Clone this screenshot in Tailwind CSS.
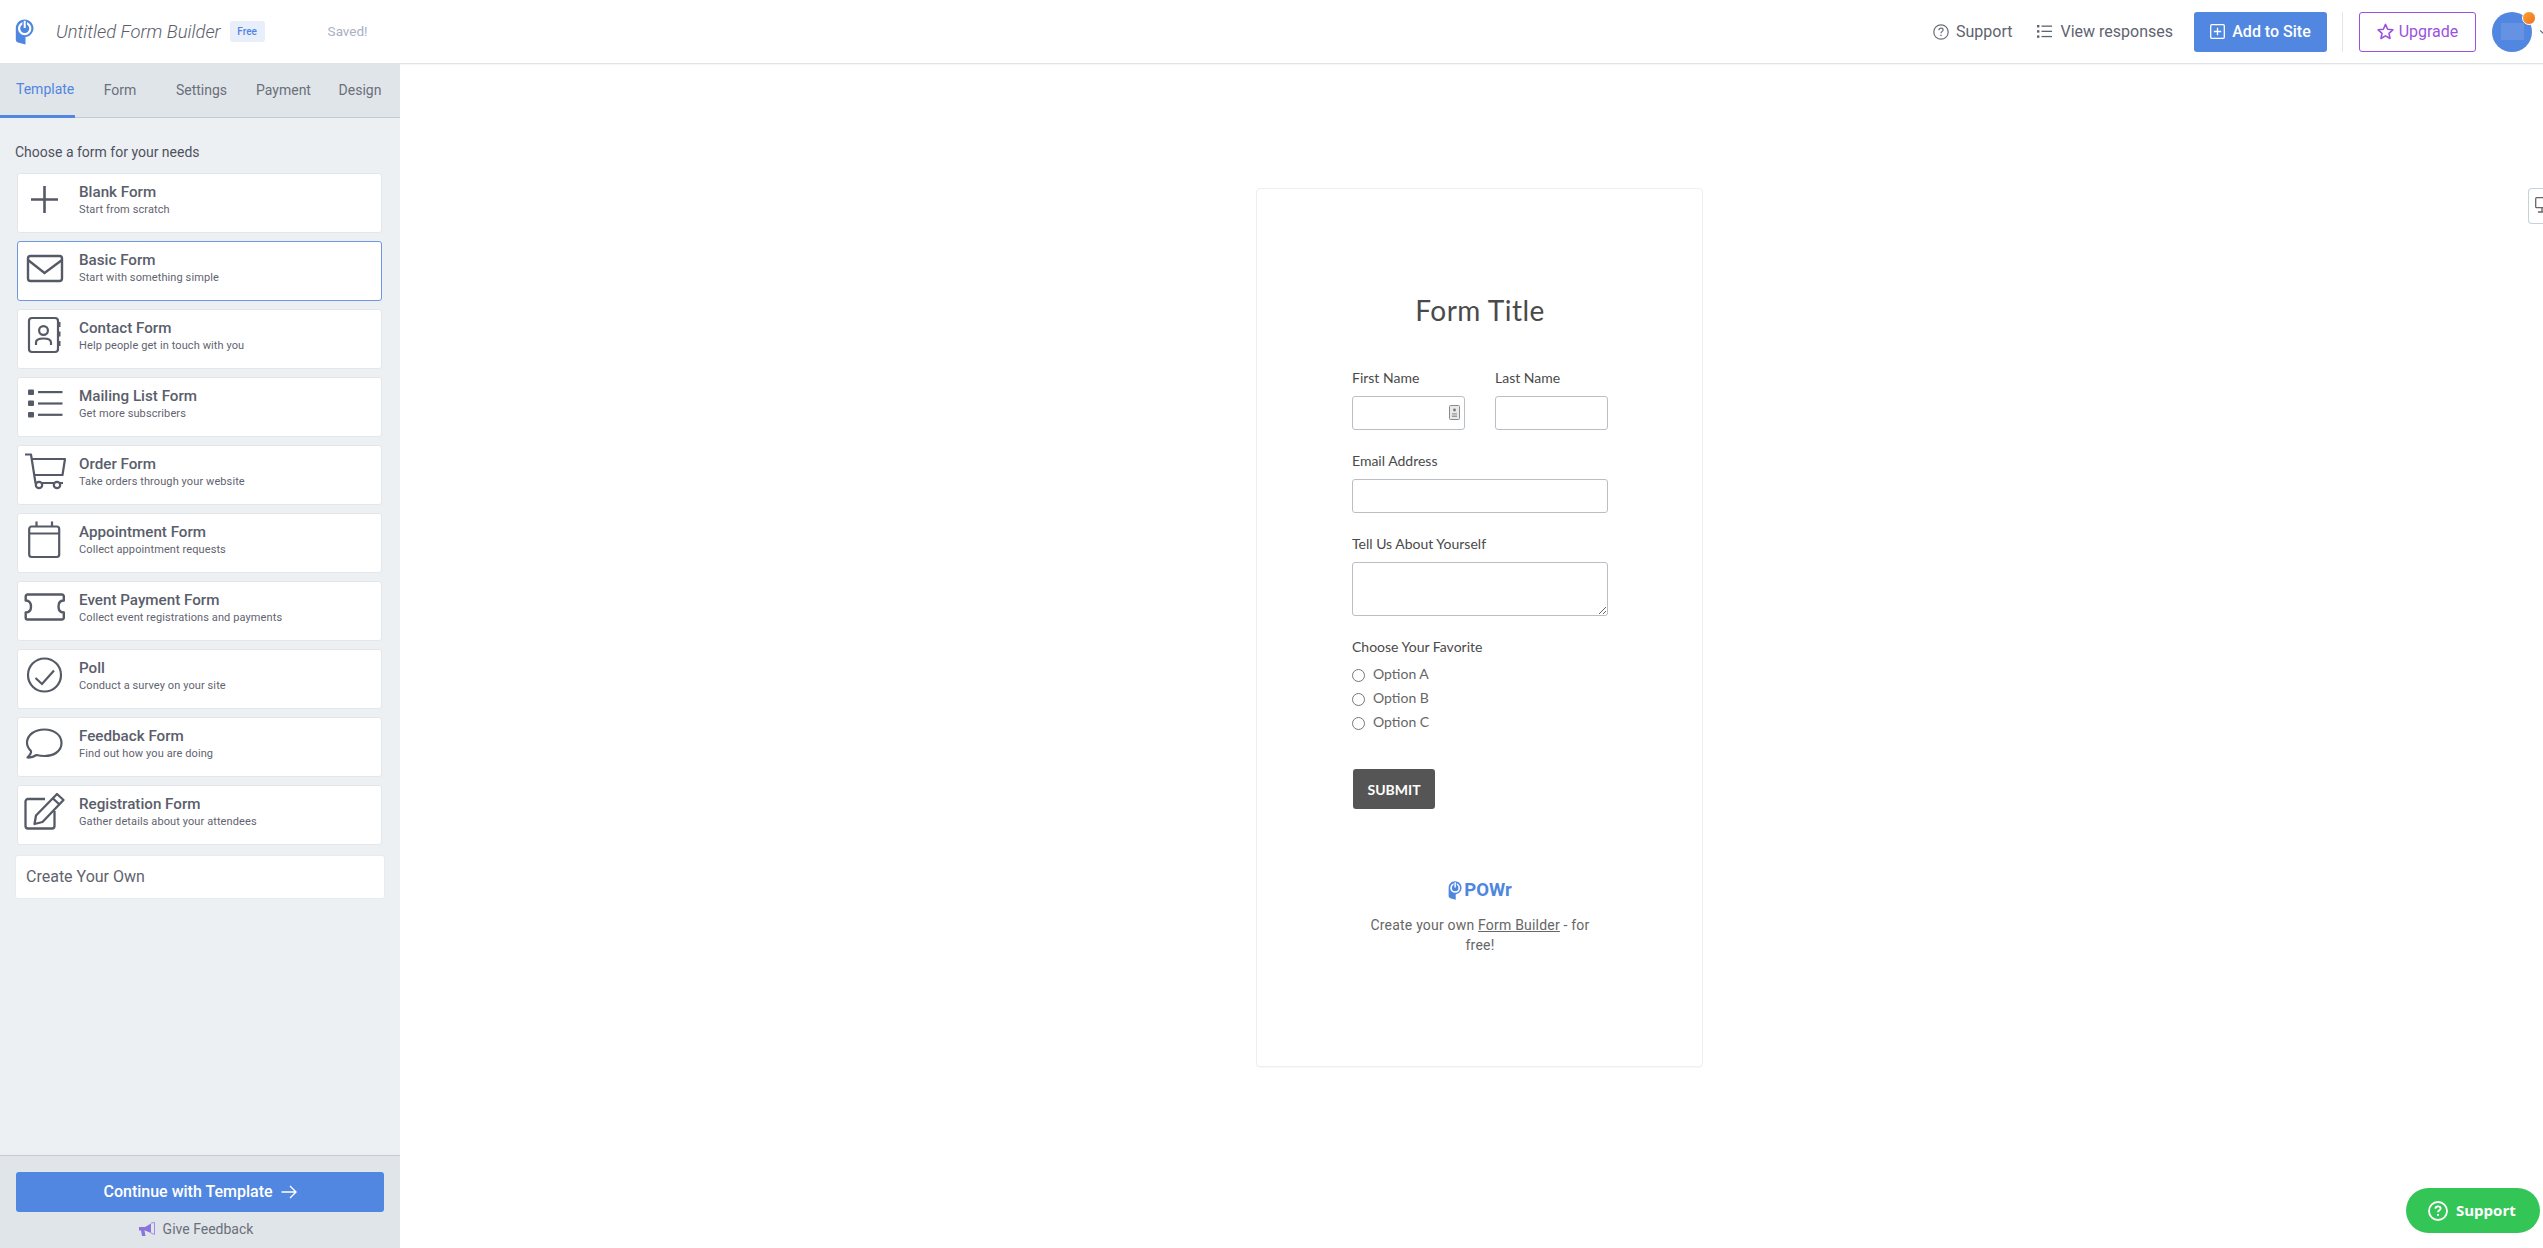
<!doctype html>
<html lang="en">
<head>
    <meta charset="UTF-8">
    <title>Untitled Form Builder</title>
    <script src="https://cdn.jsdelivr.net/npm/@tailwindcss/browser@4"></script>
</head>
<body class="font-['Roboto',sans-serif]">
<div class="h-screen w-full overflow-hidden flex flex-col bg-white relative">

    <!-- top bar -->
    <header class="h-[64px] shrink-0 border-b border-[#e0e3e8] shadow-[0_1px_1px_rgba(0,0,0,0.03)] flex items-center pl-[15px]">
        <svg class="w-[19px] h-[26px] shrink-0" viewBox="0 0 19 26">
            <path fill="#4f86e0" d="M9.5 0.5C14.5 0.5 18.5 4.5 18.5 9.3C18.5 14 14.5 18 10.5 18V25.5L3 23.5C1.5 23 0.8 22 0.8 20.5V9.3C0.8 4.5 4.5 0.5 9.5 0.5Z"/>
            <circle cx="9.7" cy="9.5" r="5.6" fill="none" stroke="#fff" stroke-width="2.2"/>
            <path d="M9.7 2.5V9.5" stroke="#4f86e0" stroke-width="4.6"/>
            <path d="M9.7 1.8V9" stroke="#fff" stroke-width="2"/>
        </svg>
        <span class="ml-[22px] text-[18.4px] italic font-light text-[#5a5e6b] whitespace-nowrap">Untitled Form Builder</span>
        <span class="ml-[9px] h-[21px] w-[35px] rounded-[3px] bg-[#e8effb] text-[#4f86e0] text-[10px] font-medium flex items-center justify-center">Free</span>
        <span class="ml-[63px] text-[13.5px] text-[#a9b0bf]">Saved!</span>

        <div class="ml-auto flex items-center">
            <svg class="w-[16px] h-[16px]" viewBox="0 0 16 16" fill="none" stroke="#6b6f7b" stroke-width="1.2">
                <circle cx="8" cy="8" r="7.2"/>
                <path d="M5.9 6.2C5.9 5 6.8 4.2 8 4.2C9.2 4.2 10.1 5 10.1 6C10.1 7.4 8 7.4 8 9.2"/>
                <path d="M8 10.8V12" stroke-width="1.4"/>
            </svg>
            <span class="ml-[7px] text-[16px] text-[#5f636f]">Support</span>
            <svg class="ml-[25px] w-[15px] h-[15px]" viewBox="0 0 15 15" fill="#5f636f">
                <rect x="0" y="1" width="2.4" height="2.4"/><rect x="0" y="6.2" width="2.4" height="2.4"/><rect x="0" y="11.4" width="2.4" height="2.4"/>
                <rect x="4.5" y="1.5" width="10.5" height="1.3"/><rect x="4.5" y="6.7" width="10.5" height="1.3"/><rect x="4.5" y="11.9" width="10.5" height="1.3"/>
            </svg>
            <span class="ml-[8px] text-[16px] text-[#5f636f] whitespace-nowrap">View responses</span>

            <button class="ml-[21px] h-[40px] w-[133px] rounded-[3px] bg-[#5187e0] text-white text-[16px] font-medium flex items-center justify-center gap-[7px]">
                <svg class="w-[15px] h-[15px]" viewBox="0 0 15 15" fill="none" stroke="#fff" stroke-width="1.3">
                    <rect x="0.7" y="0.7" width="13.6" height="13.6" rx="1"/>
                    <path d="M7.5 3.8V11.2M3.8 7.5H11.2"/>
                </svg>
                Add to Site
            </button>
            <div class="ml-[15px] w-px h-[40px] bg-[#e3e5e9]"></div>
            <button class="ml-[16px] h-[40px] w-[117px] rounded-[3px] border border-[#9b51e0] text-[#9b51e0] text-[16px] flex items-center justify-center gap-[5px]">
                <svg class="w-[17px] h-[17px]" viewBox="0 0 24 24" fill="none" stroke="#9b51e0" stroke-width="2.2" stroke-linejoin="round">
                    <path d="M12 2L15 8.8L22.4 9.6L16.9 14.6L18.4 21.9L12 18.2L5.6 21.9L7.1 14.6L1.6 9.6L9 8.8Z"/>
                </svg>
                Upgrade
            </button>
            <div class="ml-[16px] relative w-[40px] h-[40px] rounded-full bg-[#5187e0] flex items-center justify-center">
                <div class="w-[23px] h-[17px] bg-[#6592e2]"></div>
                <span class="absolute -top-[1px] -right-[4px] w-[14px] h-[14px] rounded-full border border-white bg-gradient-to-br from-[#f5a623] to-[#f26a2e]"></span>
            </div>
            <svg class="ml-[8px] w-[3px] h-[6px]" viewBox="0 0 3 6" fill="none" stroke="#6b6f7b" stroke-width="1.2"><path d="M0 1.5L4 5"/></svg>
        </div>
    </header>

    <div class="flex-1 flex min-h-0">
        <!-- sidebar -->
        <aside class="w-[400px] shrink-0 flex flex-col bg-[#edf0f3]">
            <nav class="h-[54px] shrink-0 bg-[#e0e5e9] border-b border-[#c6cacf] flex text-[14px] text-[#6b6f7b]">
                <a class="w-[75px] h-[54px] flex items-center pl-[16px] text-[#5187e0] border-b-[3px] border-[#5187e0] whitespace-nowrap">Template</a>
                <a class="w-[90px] flex items-center justify-center">Form</a>
                <a class="w-[73px] flex items-center justify-center">Settings</a>
                <a class="w-[91px] flex items-center justify-center">Payment</a>
                <a class="w-[62px] flex items-center justify-center">Design</a>
            </nav>

            <div class="flex-1 min-h-0 pt-[24px]">
                <p class="pl-[15px] text-[14px] leading-[20px] text-[#4d5160]">Choose a form for your needs</p>
                <div class="mt-[11px] ml-[17px] w-[365px] flex flex-col gap-[8px]">

                    <div class="h-[60px] bg-white rounded-[3px] border border-[#e4e7ea] flex">
                        <svg class="ml-[6px] mt-[4px] w-[42px] h-[42px] shrink-0" viewBox="0 0 42 42" fill="none" stroke="#555a66" stroke-width="2.6">
                            <path d="M20.5 8V35M7 21.5H34"/>
                        </svg>
                        <div class="ml-[13px] pt-[9px]">
                            <div class="text-[15.2px] leading-[18px] font-medium text-[#5a5e6b]">Blank Form</div>
                            <div class="mt-[2px] text-[11px] leading-[14px] tracking-[0.1px] text-[#5f636f]">Start from scratch</div>
                        </div>
                    </div>

                    <div class="h-[60px] bg-white rounded-[3px] border border-[#6d97e3] flex">
                        <svg class="ml-[6px] mt-[4px] w-[42px] h-[42px] shrink-0" viewBox="0 0 42 42" fill="none" stroke="#555a66" stroke-width="2.4">
                            <rect x="4" y="10" width="34" height="25" rx="2.5"/>
                            <path d="M4 14L20.5 27L38 14"/>
                        </svg>
                        <div class="ml-[13px] pt-[9px]">
                            <div class="text-[15.2px] leading-[18px] font-medium text-[#5a5e6b]">Basic Form</div>
                            <div class="mt-[2px] text-[11px] leading-[14px] tracking-[0.1px] text-[#5f636f]">Start with something simple</div>
                        </div>
                    </div>

                    <div class="h-[60px] bg-white rounded-[3px] border border-[#e4e7ea] flex">
                        <svg class="ml-[6px] mt-[4px] w-[42px] h-[42px] shrink-0" viewBox="0 0 42 42" fill="none" stroke="#555a66" stroke-width="2.2">
                            <rect x="5" y="4" width="29" height="34" rx="3"/>
                            <path d="M35 8V13M35 17.5V22.5M35 27V32" stroke-width="3"/>
                            <circle cx="19.5" cy="16.5" r="4.4"/>
                            <path d="M12 31V28.5C12 25.5 14.5 24.5 19.5 24.5C24.5 24.5 27 25.5 27 28.5V31"/>
                        </svg>
                        <div class="ml-[13px] pt-[9px]">
                            <div class="text-[15.2px] leading-[18px] font-medium text-[#5a5e6b]">Contact Form</div>
                            <div class="mt-[2px] text-[11px] leading-[14px] tracking-[0.1px] text-[#5f636f]">Help people get in touch with you</div>
                        </div>
                    </div>

                    <div class="h-[60px] bg-white rounded-[3px] border border-[#e4e7ea] flex">
                        <svg class="ml-[6px] mt-[4px] w-[42px] h-[42px] shrink-0" viewBox="0 0 42 42" fill="#555a66">
                            <rect x="4" y="7.5" width="6" height="5.5" rx="1"/><rect x="4" y="18.5" width="6" height="5.5" rx="1"/><rect x="4" y="30" width="6" height="5.5" rx="1"/>
                            <rect x="14" y="9" width="24.5" height="2.2"/><rect x="14" y="20.4" width="24.5" height="2.2"/><rect x="14" y="31.7" width="24.5" height="2.2"/>
                        </svg>
                        <div class="ml-[13px] pt-[9px]">
                            <div class="text-[15.2px] leading-[18px] font-medium text-[#5a5e6b]">Mailing List Form</div>
                            <div class="mt-[2px] text-[11px] leading-[14px] tracking-[0.1px] text-[#5f636f]">Get more subscribers</div>
                        </div>
                    </div>

                    <div class="h-[60px] bg-white rounded-[3px] border border-[#e4e7ea] flex">
                        <svg class="ml-[6px] mt-[4px] w-[42px] h-[42px] shrink-0" viewBox="0 0 42 42" fill="none" stroke="#555a66" stroke-width="2.2" stroke-linejoin="round">
                            <path d="M1 4.5H7L11.5 33H39"/>
                            <path d="M7.5 9H41L38.5 25H10"/>
                            <circle cx="15" cy="35" r="3.2" fill="#fff"/><circle cx="33" cy="35" r="3.2" fill="#fff"/>
                        </svg>
                        <div class="ml-[13px] pt-[9px]">
                            <div class="text-[15.2px] leading-[18px] font-medium text-[#5a5e6b]">Order Form</div>
                            <div class="mt-[2px] text-[11px] leading-[14px] tracking-[0.1px] text-[#5f636f]">Take orders through your website</div>
                        </div>
                    </div>

                    <div class="h-[60px] bg-white rounded-[3px] border border-[#e4e7ea] flex">
                        <svg class="ml-[6px] mt-[4px] w-[42px] h-[42px] shrink-0" viewBox="0 0 42 42" fill="none" stroke="#555a66" stroke-width="2.2">
                            <rect x="5.2" y="8.5" width="30" height="30.5" rx="2.5"/>
                            <path d="M5.2 15.5H35.2M12.5 3.5V8.5M28 3.5V8.5"/>
                        </svg>
                        <div class="ml-[13px] pt-[9px]">
                            <div class="text-[15.2px] leading-[18px] font-medium text-[#5a5e6b]">Appointment Form</div>
                            <div class="mt-[2px] text-[11px] leading-[14px] tracking-[0.1px] text-[#5f636f]">Collect appointment requests</div>
                        </div>
                    </div>

                    <div class="h-[60px] bg-white rounded-[3px] border border-[#e4e7ea] flex">
                        <svg class="ml-[6px] mt-[4px] w-[42px] h-[42px] shrink-0" viewBox="0 0 42 42" fill="none" stroke="#555a66" stroke-width="2.4" stroke-linejoin="round">
                            <path d="M3.5 8.5H38A1.8 1.8 0 0 1 39.8 10.3V14.5C36 14.5 34.5 17 34.5 20.5C34.5 24 36 26.5 39.8 26.5V31.7A1.8 1.8 0 0 1 38 33.5H3.5A1.8 1.8 0 0 1 1.7 31.7V26.5C5.5 26.5 7 24 7 20.5C7 17 5.5 14.5 1.7 14.5V10.3A1.8 1.8 0 0 1 3.5 8.5Z"/>
                        </svg>
                        <div class="ml-[13px] pt-[9px]">
                            <div class="text-[15.2px] leading-[18px] font-medium text-[#5a5e6b]">Event Payment Form</div>
                            <div class="mt-[2px] text-[11px] leading-[14px] tracking-[0.1px] text-[#5f636f]">Collect event registrations and payments</div>
                        </div>
                    </div>

                    <div class="h-[60px] bg-white rounded-[3px] border border-[#e4e7ea] flex">
                        <svg class="ml-[6px] mt-[4px] w-[42px] h-[42px] shrink-0" viewBox="0 0 42 42" fill="none" stroke="#555a66" stroke-width="2.2">
                            <circle cx="20.5" cy="21" r="16.5"/>
                            <path d="M11.5 24L18 30L30 16.5"/>
                        </svg>
                        <div class="ml-[13px] pt-[9px]">
                            <div class="text-[15.2px] leading-[18px] font-medium text-[#5a5e6b]">Poll</div>
                            <div class="mt-[2px] text-[11px] leading-[14px] tracking-[0.1px] text-[#5f636f]">Conduct a survey on your site</div>
                        </div>
                    </div>

                    <div class="h-[60px] bg-white rounded-[3px] border border-[#e4e7ea] flex">
                        <svg class="ml-[6px] mt-[4px] w-[42px] h-[42px] shrink-0" viewBox="0 0 42 42" fill="none" stroke="#555a66" stroke-width="2.2" stroke-linejoin="round">
                            <path d="M3.5 35.5C6 33 7.5 31 7 29C4.5 26.5 3 24 3 21C3 13 10.5 7.5 20.5 7.5C30 7.5 37.5 13 37.5 21C37.5 29 30 34 20.5 34C17.5 34 14.5 33.5 12.5 33C9.5 35 6.5 35.7 3.5 35.5Z"/>
                        </svg>
                        <div class="ml-[13px] pt-[9px]">
                            <div class="text-[15.2px] leading-[18px] font-medium text-[#5a5e6b]">Feedback Form</div>
                            <div class="mt-[2px] text-[11px] leading-[14px] tracking-[0.1px] text-[#5f636f]">Find out how you are doing</div>
                        </div>
                    </div>

                    <div class="h-[60px] bg-white rounded-[3px] border border-[#e4e7ea] flex">
                        <svg class="ml-[6px] mt-[4px] w-[42px] h-[42px] shrink-0" viewBox="0 0 42 42" fill="none" stroke="#555a66" stroke-width="2.3" stroke-linejoin="round">
                            <path d="M21 9H4A2.5 2.5 0 0 0 1.5 11.5V36A2.5 2.5 0 0 0 4 38.5H28A2.5 2.5 0 0 0 30.5 36V21"/>
                            <path d="M10.5 34L12 25.5L33 4L39.5 10L18.5 32Z"/>
                            <path d="M29 8.5L35.5 14.5"/>
                        </svg>
                        <div class="ml-[13px] pt-[9px]">
                            <div class="text-[15.2px] leading-[18px] font-medium text-[#5a5e6b]">Registration Form</div>
                            <div class="mt-[2px] text-[11px] leading-[14px] tracking-[0.1px] text-[#5f636f]">Gather details about your attendees</div>
                        </div>
                    </div>
                </div>

                <div class="mt-[10px] ml-[15px] w-[370px] h-[44px] bg-white rounded-[3px] border border-[#e8ebee] flex items-center pl-[10px] text-[16px] text-[#5f636f]">Create Your Own</div>
            </div>

            <div class="h-[93px] shrink-0 bg-[#e0e5e9] border-t border-[#c6cacf] px-[16px] pt-[16px]">
                <button class="w-full h-[40px] rounded-[3px] bg-[#5187e0] text-white text-[16px] font-medium flex items-center justify-center gap-[8px]">
                    Continue with Template
                    <svg class="w-[16px] h-[14px]" viewBox="0 0 16 14" fill="none" stroke="#fff" stroke-width="1.4"><path d="M0.5 7H15M9 1L15 7L9 13"/></svg>
                </button>
                <div class="mt-[7px] pr-[8px] flex items-center justify-center gap-[8px] text-[14px] text-[#6b6f7b]">
                    <svg class="w-[16px] h-[15px]" viewBox="0 0 16 15">
                        <path fill="#8a75dc" d="M0 5H6L12 1.5V11L6 8.5H5.5L6.5 14H3L2 8.5H0Z"/>
                        <path fill="none" stroke="#a58be3" stroke-width="1" d="M12 1L15.5 0.5V12.5L12 11"/>
                    </svg>
                    Give Feedback
                </div>
            </div>
        </aside>

        <!-- form preview -->
        <main class="flex-1 min-w-0 flex justify-center items-start pt-[124px]">
            <div class="w-[447px] h-[879px] ml-[16px] bg-white rounded-[4px] border border-[#eeeff1] shadow-[0_1px_1px_rgba(0,0,0,0.03)] pl-[95px] pr-[94px] pt-[103px] font-['Lato',sans-serif]">
                <h1 class="text-center text-[28px] leading-[36px] tracking-[0.5px] text-[#4a4a4a]">Form Title</h1>

                <div class="mt-[41px] grid grid-cols-2 gap-x-[30px]">
                    <div>
                        <label class="block text-[14px] leading-[18px] text-[#4a4a4a]">First Name</label>
                        <div class="relative mt-[9px]">
                            <input type="text" class="block w-full h-[34px] rounded-[3px] border border-[#b9bfc5]">
                            <svg class="absolute right-[5px] top-[9px] w-[11px] h-[15px]" viewBox="0 0 11 15">
                                <rect x="0.5" y="0.5" width="10" height="14" rx="1" fill="#e9e9e9" stroke="#8a8a8a"/>
                                <circle cx="5.5" cy="5" r="1.4" fill="#777"/><path d="M3 8.3H8V9.6H3ZM3 10.6H8V12H3Z" fill="#999"/>
                            </svg>
                        </div>
                    </div>
                    <div>
                        <label class="block text-[14px] leading-[18px] text-[#4a4a4a]">Last Name</label>
                        <input type="text" class="block mt-[9px] w-full h-[34px] rounded-[3px] border border-[#b9bfc5]">
                    </div>
                </div>

                <label class="block mt-[22px] text-[14px] leading-[18px] text-[#4a4a4a]">Email Address</label>
                <input type="text" class="block mt-[9px] w-full h-[34px] rounded-[3px] border border-[#b9bfc5]">

                <label class="block mt-[22px] text-[14px] leading-[18px] text-[#4a4a4a]">Tell Us About Yourself</label>
                <textarea class="block mt-[9px] w-full h-[54px] rounded-[3px] border border-[#b9bfc5]"></textarea>

                <label class="block mt-[22px] text-[14px] leading-[18px] text-[#4a4a4a]">Choose Your Favorite</label>
                <div class="mt-[6px] flex flex-col text-[14px] leading-[24px] text-[#666]">
                    <label class="h-[24px] flex items-center gap-[8px]"><input type="radio" name="fav" class="w-[13px] h-[13px] mt-[3px]">Option A</label>
                    <label class="h-[24px] flex items-center gap-[8px]"><input type="radio" name="fav" class="w-[13px] h-[13px] mt-[3px]">Option B</label>
                    <label class="h-[24px] flex items-center gap-[8px]"><input type="radio" name="fav" class="w-[13px] h-[13px] mt-[3px]">Option C</label>
                </div>

                <button class="block mt-[35px] ml-px w-[82px] h-[40px] rounded-[3px] bg-[#555555] text-white text-[14px] font-bold">SUBMIT</button>

                <div class="mt-[69px] flex items-center justify-center gap-[2px]">
                    <svg class="w-[14px] h-[19px]" viewBox="0 0 19 26">
                        <path fill="#4f86e0" d="M9.5 0.5C14.5 0.5 18.5 4.5 18.5 9.3C18.5 14 14.5 18 10.5 18V25.5L3 23.5C1.5 23 0.8 22 0.8 20.5V9.3C0.8 4.5 4.5 0.5 9.5 0.5Z"/>
                        <circle cx="9.7" cy="9.5" r="5.6" fill="none" stroke="#fff" stroke-width="2.2"/>
                        <path d="M9.7 2.5V9.5" stroke="#4f86e0" stroke-width="4.6"/>
                        <path d="M9.7 1.8V9" stroke="#fff" stroke-width="2"/>
                    </svg>
                    <span class="font-['Roboto',sans-serif] text-[18.5px] leading-[24px] font-bold text-[#4f86e0]">POWr</span>
                </div>
                <div class="mt-[13px] text-center font-['Roboto',sans-serif] text-[14px] leading-[20px] tracking-[0.2px] text-[#666] whitespace-nowrap">
                    <div><span>Create your own </span><a class="underline">Form Builder</a><span> - for</span></div>
                    <div>free!</div>
                </div>
            </div>
        </main>
    </div>

    <!-- device toggle, pinned to the right edge -->
    <div class="absolute right-0 top-[188px] w-[15px] h-[36px] bg-white rounded-l-[4px] border border-r-0 border-[#c5d3d8] overflow-hidden">
        <svg class="ml-[6px] mt-[8px] w-[14px] h-[16px]" viewBox="0 0 14 16" fill="none" stroke="#666" stroke-width="1.3">
            <rect x="0.7" y="0.7" width="13" height="10" rx="1"/><path d="M7 11V14.5M3 15H11"/>
        </svg>
    </div>

    <!-- support bubble -->
    <button class="absolute left-[2406px] top-[1188px] w-[134px] h-[45px] rounded-full bg-[#34c557] text-white flex items-center pl-[22px] gap-[8px] font-['Open_Sans',sans-serif] text-[15px] font-bold">
        <svg class="w-[20px] h-[20px]" viewBox="0 0 20 20" fill="none" stroke="#fff" stroke-width="1.8">
            <circle cx="10" cy="10" r="9"/>
            <path d="M7.4 7.8C7.4 6.3 8.5 5.4 10 5.4C11.5 5.4 12.6 6.3 12.6 7.6C12.6 9.3 10 9.3 10 11.3"/>
            <path d="M10 13V14.8" stroke-width="2"/>
        </svg>
        Support
    </button>
</div>
</body>
</html>
